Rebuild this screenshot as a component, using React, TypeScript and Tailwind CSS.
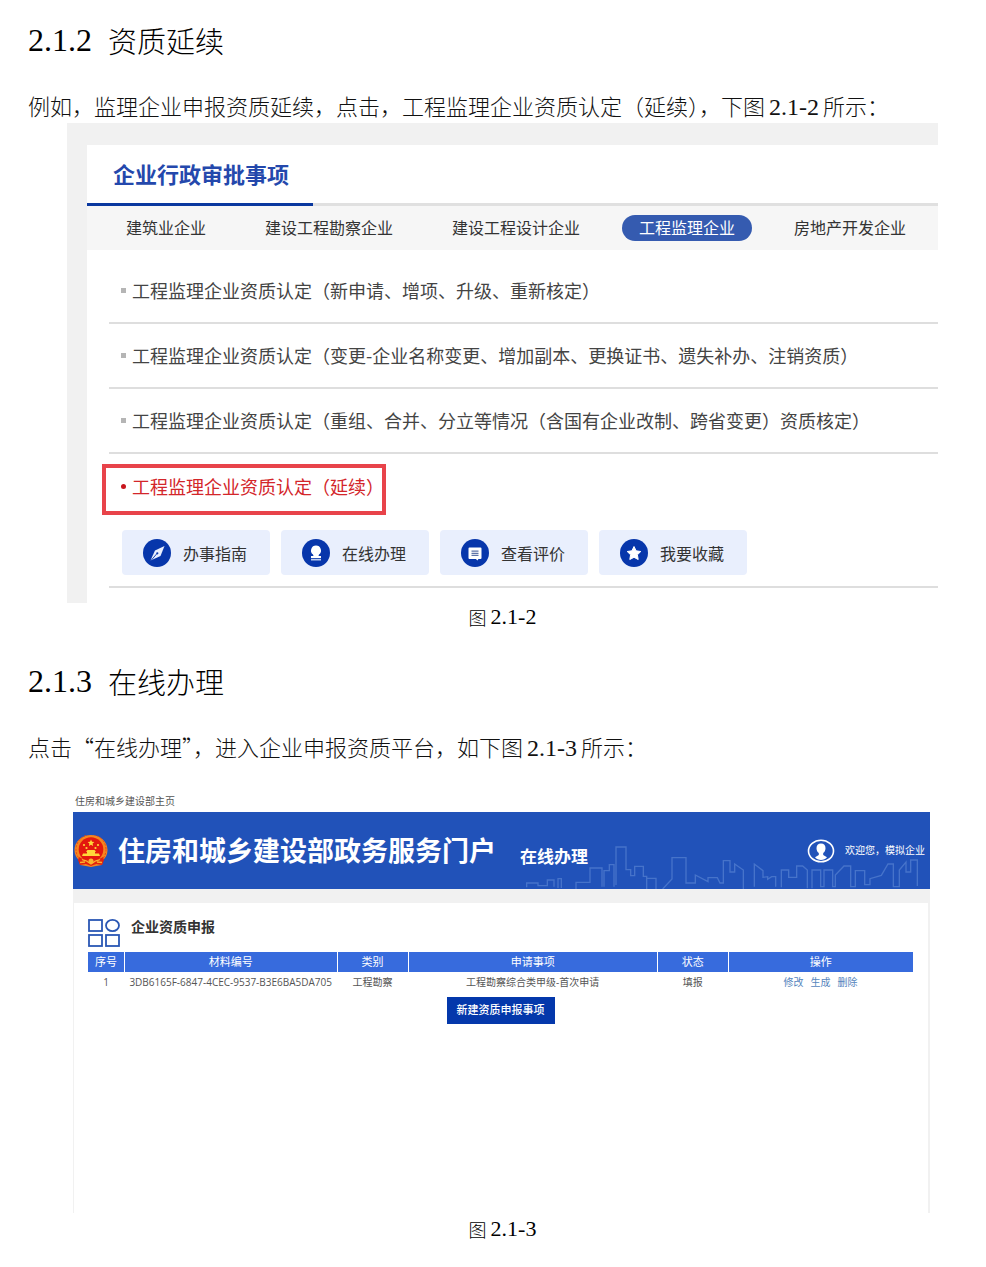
import type { ReactNode } from 'react';

const tabs = ['建筑业企业', '建设工程勘察企业', '建设工程设计企业', '工程监理企业', '房地产开发企业'];

const items = [
  '工程监理企业资质认定（新申请、增项、升级、重新核定）',
  '工程监理企业资质认定（变更-企业名称变更、增加副本、更换证书、遗失补办、注销资质）',
  '工程监理企业资质认定（重组、合并、分立等情况（含国有企业改制、跨省变更）资质核定）',
];

function Heading({ number, title }: { number: string; title: string }) {
  return (
    <h2 className="flex items-center px-7 text-[29px] leading-10 font-light">
      <span className="w-20 font-['Liberation_Serif',serif] text-[32px] leading-10">{number}</span>
      {title}
    </h2>
  );
}

function FigureNumber({ children }: { children: ReactNode }) {
  return <span className="mx-1 font-['Liberation_Serif',serif] text-2xl leading-none">{children}</span>;
}

function Paragraph({ children }: { children: ReactNode }) {
  return <p className="mt-[30px] px-7 text-[22px] leading-[30px] font-light text-[#111]">{children}</p>;
}

function Caption({ number }: { number: string }) {
  return (
    <figcaption className="flex items-center justify-center gap-1 text-lg leading-7 font-light">
      图
      <span className="font-['Liberation_Serif',serif] text-[22px] leading-7">{number}</span>
    </figcaption>
  );
}

function RoundIcon({ children }: { children: ReactNode }) {
  return (
    <svg viewBox="0 0 28 28" className="size-7 shrink-0" aria-hidden="true">
      <circle cx="14" cy="14" r="14" fill="#0736ab" />
      {children}
    </svg>
  );
}

const actions: { label: string; icon: ReactNode }[] = [
  {
    label: '办事指南',
    icon: (
      <RoundIcon>
        <path d="M21.500 7 17.500 17l-5.500 2.500-4.500 2 2-4.500 2.500-5.500z" fill="#e9effd" />
        <path d="m8 21.500 6-7" stroke="#0736ab" strokeWidth="0.900" />
        <circle cx="14.300" cy="14.300" r="1.100" fill="#0736ab" />
      </RoundIcon>
    ),
  },
  {
    label: '在线办理',
    icon: (
      <RoundIcon>
        <path d="M14 6.500a5 5 0 0 0-3 9l.5 1.500H9v2h10v-2h-2.500l.5-1.500a5 5 0 0 0-3-9z" fill="#fff" />
        <rect x="9" y="19.800" width="10" height="1.700" fill="#b9c9ee" />
      </RoundIcon>
    ),
  },
  {
    label: '查看评价',
    icon: (
      <RoundIcon>
        <path d="M8.500 8.500h11a1 1 0 0 1 1 1v9.500a1 1 0 0 1-1 1h-2l-1.200 1.500L15 20H8.500a1 1 0 0 1-1-1V9.500a1 1 0 0 1 1-1z" fill="#fff" />
        <path d="M10.500 12.200h7M10.500 14.300h7M10.500 16.400h7" stroke="#5f74a8" strokeWidth="1.200" />
      </RoundIcon>
    ),
  },
  {
    label: '我要收藏',
    icon: (
      <RoundIcon>
        <path
          d="m14 7.500 2.100 4.300 4.700.7-3.400 3.300.8 4.700-4.200-2.200-4.200 2.200.8-4.700-3.400-3.300 4.700-.7z"
          fill="#fff"
          stroke="#fff"
          strokeWidth="1"
          strokeLinejoin="round"
        />
      </RoundIcon>
    ),
  },
];

function Emblem() {
  return (
    <svg viewBox="0 0 34 32" className="h-8 w-[34px] shrink-0" aria-hidden="true">
      <path d="M17 0C8 0 .5 6.500.5 15c0 4.500 2 8 4.500 10l1 5 6 1 5 1 5-1 6-1 1-5c2.500-2 4.500-5.500 4.500-10C33.500 6.500 26 0 17 0z" fill="#f6861f" />
      <circle cx="17" cy="14.500" r="15" fill="none" stroke="#e2441b" strokeWidth="1" strokeDasharray="2 1.500" />
      <circle cx="17" cy="14.500" r="12.300" fill="#e3180f" />
      <path d="m17 4.500 1 2.200 2.400.2-1.800 1.600.5 2.400-2.100-1.200-2.100 1.200.5-2.400-1.800-1.600 2.400-.2z" fill="#ffd83a" />
      <g fill="#ffd83a">
        <circle cx="10" cy="10" r="1.100" />
        <circle cx="24" cy="10" r="1.100" />
        <circle cx="12.500" cy="13" r="1.100" />
        <circle cx="21.500" cy="13" r="1.100" />
        <path d="M12 16.500 13.500 15h7l1.500 1.500-1 .5v1.500h4l1 2.500H8l1-2.500h4V17z" />
      </g>
      <path d="M5 22c4 3 8 2.500 12 2.500S25 25 29 22l1 3-2 5-6-1-5 2-5-2-6 1-2-5z" fill="#e3220f" />
      <path d="M8 24.500c3 1.500 5 1 6 2.500l3 2 3-2c1-1.500 3-1 6-2.500M6 27.500l5-.5M23 27l5 .5" fill="none" stroke="#fbb32c" strokeWidth="1.300" />
      <circle cx="17" cy="26" r="2.500" fill="#fbb32c" />
    </svg>
  );
}

function Skyline() {
  return (
    <svg viewBox="75 165 1212 132" className="absolute right-px bottom-0 h-11 w-[404px]" aria-hidden="true">
      <path
        d="M80 292v-13h34v8h28v-17h20v20M174 294v-28h10v28M228 297v-20h42v-43h36v56M312 290v-48h16v-18h14v66M348 285V171h30v68h14v18h12v-28h26v30h10v34M440 297v-32h28v32M488 297l28-30v-64h42v76h28v-24l38 20v-12h28l8 16h10v-67h20v34h14v-24l26 18v57M763 290v-68l26 20v20l14-2v8l12-8h12v30M844 292v-52h22v22h24v-34h18l14 12v55M936 295v-55h26v50h10v-50h26v50h8v-35l26-27h20v62h14v-48h28v42h16v-18l34-10 20-34h16v68h18v-50l20-24v30h14v-36h20v78"
        fill="none"
        stroke="#4673ca"
        strokeWidth="4"
      />
    </svg>
  );
}

function ApprovalFigure() {
  return (
    <figure>
      <div className="mr-12 ml-[67px] bg-[#f1f1f1] pt-[22px] pl-5 font-['Noto_Sans_CJK_SC',sans-serif]">
        <div className="bg-white pb-[15px]">
          <div className="flex border-b-3 border-[#e0e0e0]">
            <h3 className="-mb-[3px] w-[226px] border-b-3 border-[#0a389f] pt-3 pb-3.5 pl-[26px] text-[22px] leading-8 font-bold text-[#2448ac]">
              企业行政审批事项
            </h3>
          </div>
          <div className="flex h-11 items-center gap-[25px] overflow-hidden bg-[#f6f6f6] pl-[22px]">
            {tabs.map((tab) => (
              <button
                key={tab}
                type="button"
                className={
                  tab === '工程监理企业'
                    ? 'h-[26px] shrink-0 rounded-full bg-[#355bb0] px-[17px] pb-0.5 text-base leading-6 text-white'
                    : 'h-[26px] shrink-0 px-[17px] pb-0.5 text-base leading-6 text-[#333]'
                }
              >
                {tab}
              </button>
            ))}
          </div>
          <ul className="ml-[22px] pt-[9px] text-lg leading-[30px] text-[#444]">
            {items.map((item) => (
              <li key={item} className="border-b-2 border-[#dedede] pt-4 pb-[17px] pl-3">
                <a href="#item" className="flex items-center gap-1.5 whitespace-nowrap">
                  <span className="size-[5px] shrink-0 bg-[#b5b5b5]" />
                  {item}
                </a>
              </li>
            ))}
            <li className="border-b-2 border-[#dedede] pt-[17px] pb-[11px] pl-3">
              <a href="#renewal" className="relative inline-flex items-center gap-1.5 align-top text-[#d3262a]">
                <span className="size-[5px] shrink-0 rounded-full bg-[#c8161d]" />
                工程监理企业资质认定（延续）
                <span className="absolute -top-[7px] right-[-2px] -bottom-3.5 -left-[19px] border-4 border-[#e8434a]" />
              </a>
              <div className="mt-[29px] ml-px flex gap-[11px]">
                {actions.map(({ label, icon }) => (
                  <button
                    key={label}
                    type="button"
                    className="flex h-[45px] w-[148px] items-center gap-3 rounded bg-[#e9effd] pl-[21px] text-base text-[#333]"
                  >
                    {icon}
                    {label}
                  </button>
                ))}
              </div>
            </li>
          </ul>
        </div>
      </div>
      <div className="mr-12 ml-[67px]">
        <Caption number="2.1-2" />
      </div>
    </figure>
  );
}

const columns = [
  { name: '序号', width: 'w-[4.4%]' },
  { name: '材料编号', width: 'w-[25.8%]' },
  { name: '类别', width: 'w-[8.6%]' },
  { name: '申请事项', width: 'w-[30.2%]' },
  { name: '状态', width: 'w-[8.6%]' },
  { name: '操作', width: 'w-[22.4%]' },
];

function PortalFigure() {
  return (
    <figure className="mt-[29px]">
      <div className="mr-14 ml-[73px] font-['Open_Sans','Noto_Sans_CJK_SC',sans-serif] text-[10px] text-[#555]">
        <a href="#home" className="block pl-0.5 leading-[22px]">
          住房和城乡建设部主页
        </a>
        <header className="relative flex h-[77px] items-center bg-[#2152b9] text-white">
          <Skyline />
          <div className="relative flex flex-1 items-center pl-px">
            <Emblem />
            <h3 className="ml-2.5 text-[27px] leading-8 font-bold">住房和城乡建设部政务服务门户</h3>
            <span className="mt-3 ml-6 text-[17px] leading-6 font-bold">在线办理</span>
          </div>
          <div className="relative flex items-center gap-2.5 pr-[5px]">
            <svg viewBox="0 0 28 24" className="h-6 w-7" aria-hidden="true">
              <ellipse cx="14" cy="12" rx="12.500" ry="10.800" fill="none" stroke="#fff" strokeWidth="1.600" />
              <path d="M14 4.500c-3 0-4.500 2-4.500 4.700 0 2.300 1 3.800 2.300 4.800v2L8 18.200c1.500 1.800 3.600 2.800 6 2.800s4.500-1 6-2.800L16.200 16v-2c1.300-1 2.300-2.500 2.300-4.800 0-2.700-1.500-4.700-4.500-4.700z" fill="#fff" />
            </svg>
            <span>
              欢迎您，<a href="#account">模拟企业</a>
            </span>
          </div>
        </header>
        <div className="h-3.5 bg-[#f1f1f1]" />
        <div className="min-h-[310px] border-r-2 border-l border-[#f1f1f1] pt-3.5 pr-[15px] pl-3.5">
          <div className="flex items-start gap-[11px]">
            <svg viewBox="0 0 32 30" className="h-[30px] w-8" fill="none" stroke="#2a57b4" strokeWidth="1.800" aria-hidden="true">
              <rect x="1" y="3" width="13" height="11" />
              <ellipse cx="24.500" cy="8.500" rx="6.500" ry="5.700" />
              <rect x="1" y="18" width="13" height="11" />
              <rect x="18" y="18" width="13" height="11" />
            </svg>
            <h4 className="text-sm leading-5 font-bold text-[#333]">企业资质申报</h4>
          </div>
          <table className="mt-[5px] w-full table-fixed border-collapse text-center">
            <thead>
              <tr className="h-5 bg-[#376bdd] text-[11px] leading-4 text-white">
                {columns.map(({ name, width }) => (
                  <th key={name} scope="col" className={`${width} border-l border-white p-0 font-normal first:border-l-0`}>
                    {name}
                  </th>
                ))}
              </tr>
            </thead>
            <tbody>
              <tr className="h-5 leading-4 whitespace-nowrap">
                <td className="p-0">1</td>
                <td className="p-0">3DB6165F-6847-4CEC-9537-B3E6BA5DA705</td>
                <td className="p-0">工程勘察</td>
                <td className="p-0">工程勘察综合类甲级-首次申请</td>
                <td className="p-0">填报</td>
                <td className="p-0">
                  <span className="flex justify-center gap-[7px] text-[#5585bd]">
                    <a href="#edit">修改</a>
                    <a href="#generate">生成</a>
                    <a href="#delete">删除</a>
                  </span>
                </td>
              </tr>
            </tbody>
          </table>
          <button type="button" className="mx-auto mt-[5px] block h-[27px] bg-[#0438ab] px-2.5 text-[11px] font-medium text-white">
            新建资质申报事项
          </button>
        </div>
      </div>
      <div className="mr-12 ml-[67px] pt-0.5">
        <Caption number="2.1-3" />
      </div>
    </figure>
  );
}

export default function App() {
  return (
    <main lang="zh-CN" className="min-h-screen bg-white pt-5 pb-6 font-['Noto_Sans_CJK_SC',sans-serif] text-black">
      <section>
        <Heading number="2.1.2" title="资质延续" />
        <Paragraph>
          例如，监理企业申报资质延续，点击，工程监理企业资质认定（延续），下图
          <FigureNumber>2.1-2</FigureNumber>
          所示：
        </Paragraph>
        <div className="pt-[3px]">
          <ApprovalFigure />
        </div>
      </section>
      <section className="mt-[30px]">
        <Heading number="2.1.3" title="在线办理" />
        <Paragraph>
          点击“在线办理”，进入企业申报资质平台，如下图
          <FigureNumber>2.1-3</FigureNumber>
          所示：
        </Paragraph>
        <PortalFigure />
      </section>
    </main>
  );
}
